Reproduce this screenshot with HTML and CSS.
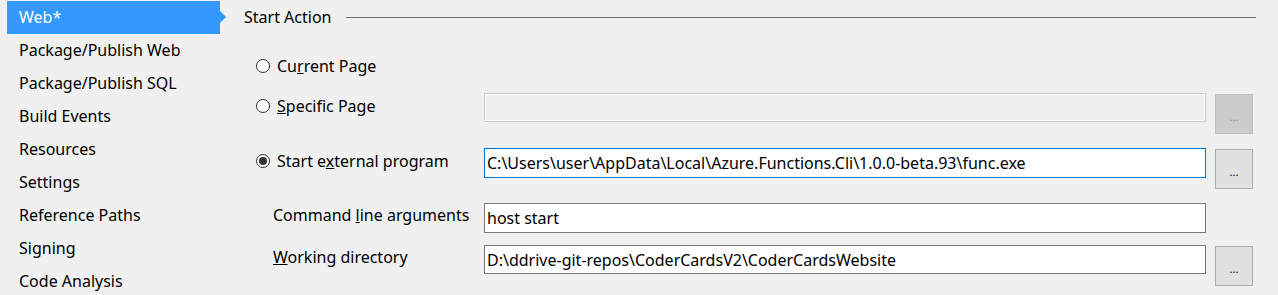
FILE: index.html
```html
<!DOCTYPE html>
<html lang="en">
<head>
  <meta charset="UTF-8">
  <title>Project Properties - Web</title>
  <link rel="stylesheet" href="styles.css">
</head>
<body>

<div class="page">
  <ul class="tabs">
    <li class="tab selected">Web*</li>
    <li class="tab">Package/Publish Web</li>
    <li class="tab">Package/Publish SQL</li>
    <li class="tab">Build Events</li>
    <li class="tab">Resources</li>
    <li class="tab">Settings</li>
    <li class="tab">Reference Paths</li>
    <li class="tab">Signing</li>
    <li class="tab">Code Analysis</li>
  </ul>

  <div class="content">
    <div class="section-head">
      <span class="section-title">Start Action</span>
      <span class="section-line"></span>
    </div>

    <div class="row row-current">
      <label class="option"><span class="radio"></span><span>Cu<u>r</u>rent Page</span></label>
    </div>

    <div class="row row-specific">
      <label class="option"><span class="radio"></span><span><u>S</u>pecific Page</span></label>
      <input type="text" class="field disabled" disabled>
      <button class="browse" disabled>...</button>
    </div>

    <div class="row row-external">
      <label class="option"><span class="radio checked"></span><span>Start e<u>x</u>ternal program</span></label>
      <input type="text" class="field focused" value="C:\Users\user\AppData\Local\Azure.Functions.Cli\1.0.0-beta.93\func.exe">
      <button class="browse">...</button>
    </div>

    <div class="row row-command">
      <label class="sub-label"><span>Command <u>l</u>ine arguments</span></label>
      <input type="text" class="field" value="host start">
    </div>

    <div class="row row-working">
      <label class="sub-label"><span><u>W</u>orking directory</span></label>
      <input type="text" class="field short" value="D:\ddrive-git-repos\CoderCardsV2\CoderCardsWebsite">
      <button class="browse">...</button>
    </div>
  </div>
</div>

</body>
</html>
```

FILE: styles.css
```css
body {
  margin: 0;
  background: #f0f0f0;
  font-family: 'Noto Sans', 'Open Sans', sans-serif;
  font-size: 16px;
  color: #000;
  overflow: hidden;
}

.page {
  display: flex;
  height: 295px;
}

.tabs {
  list-style: none;
  margin: 1px 0 0 7px;
  padding: 0;
  width: 213px;
}

.tab {
  height: 33px;
  line-height: 33px;
  padding-left: 12px;
  white-space: nowrap;
}

.tab.selected {
  position: relative;
  background: #3399ff;
  color: #fff;
  line-height: 32px;
}
.tab.selected::after {
  content: "";
  position: absolute;
  right: -6px;
  top: 10px;
  border-left: 6px solid #3399ff;
  border-top: 6px solid transparent;
  border-bottom: 6px solid transparent;
}

.content {
  margin-left: 24px;
  width: 1012px;
}

.section-head {
  display: flex;
  align-items: center;
  height: 34px;
}
.section-title { white-space: nowrap; }
.section-line {
  flex: 1;
  height: 1px;
  margin-left: 15px;
  background: #6d6d6d;
}

.row {
  display: flex;
  align-items: flex-start;
  padding-left: 12px;
}
.row-current { margin-top: 22px; height: 20px; }
.row-specific { margin-top: 17px; height: 41px; }
.row-external { margin-top: 14px; height: 41px; }
.row-command { margin-top: 14px; height: 30px; }
.row-working { margin-top: 12px; height: 42px; }

.option, .sub-label {
  display: flex;
  align-items: center;
  width: 228px;
  height: 20px;
  line-height: 20px;
  white-space: nowrap;
}
.row-specific .option { margin-top: 3px; }
.row-external .option { margin-top: 3px; }
.sub-label { padding-left: 17px; box-sizing: border-box; margin-top: 2px; }

.radio {
  width: 12px;
  height: 12px;
  border: 1px solid #333;
  border-radius: 50%;
  background: #fff;
  margin-right: 7px;
  position: relative;
  flex: none;
}
.radio.checked::after {
  content: "";
  position: absolute;
  left: 2px;
  top: 2px;
  width: 8px;
  height: 8px;
  border-radius: 50%;
  background: #333;
}

.field {
  width: 722px;
  height: 30px;
  box-sizing: border-box;
  margin: 0;
  padding: 0 2px;
  border: 1px solid #7a7a7a;
  background: #fff;
  font-family: inherit;
  font-size: 16px;
  color: #000;
  outline: none;
}
.field.disabled {
  height: 29px;
  border-color: #cccccc;
  background: #f0f0f0;
  box-shadow: inset 0 0 0 1px #fff;
}
.field.focused { border-color: #0078d7; }
.field.short { height: 29px; }

.browse {
  width: 38px;
  height: 40px;
  margin: 1px 0 0 9px;
  padding: 4px 0 0;
  border: 1px solid #adadad;
  background: #e1e1e1;
  font-family: inherit;
  font-size: 11px;
  color: #000;
}
.browse:disabled {
  border-color: #bfbfbf;
  background: #cccccc;
  color: #8a8a8a;
}
```
